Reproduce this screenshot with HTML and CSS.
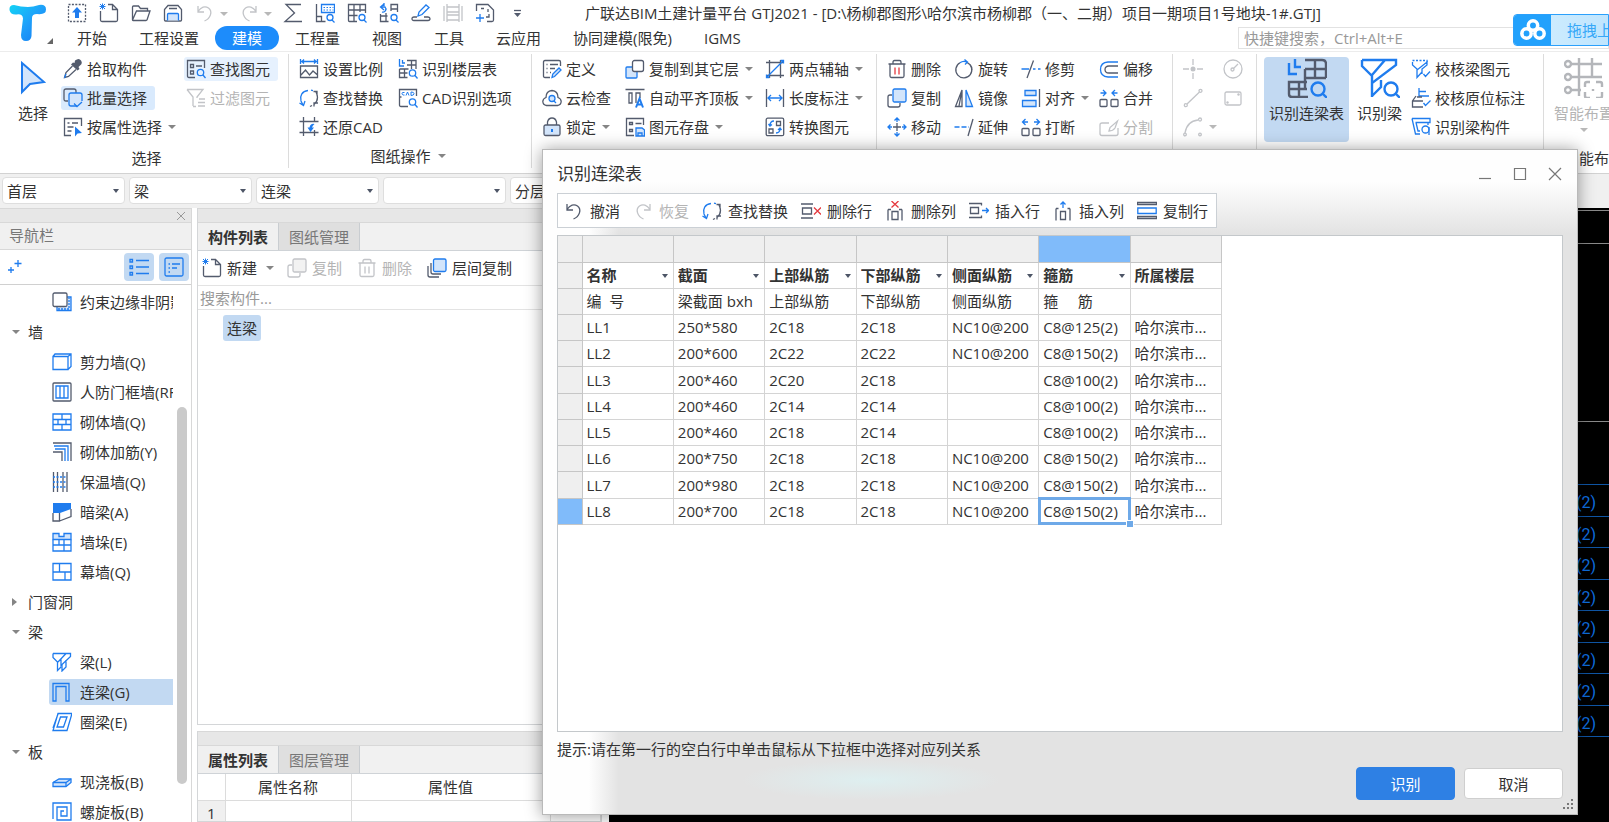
FILE: index.html
```html
<!DOCTYPE html>
<html lang="zh-CN">
<head>
<meta charset="utf-8">
<title>广联达BIM土建计量平台 GTJ2021</title>
<link rel="stylesheet" href="styles.css">
</head>
<body>
<svg class="defs" aria-hidden="true">
<defs>
<linearGradient id="logoFill" x1="0" y1="0" x2="1" y2="1"><stop offset="0" stop-color="#12d3f5"/><stop offset=".5" stop-color="#1ea0fa"/><stop offset="1" stop-color="#1479f2"/></linearGradient>
</defs>
<symbol id="i-upload" viewBox="0 0 20 20"><rect class="k" x="1.5" y="1.5" width="17" height="17" stroke-dasharray="2 1.4"/><path class="bf" d="M10 4l5 5.500h-3V15H8V9.500H5z"/></symbol>
<symbol id="i-new" viewBox="0 0 20 20"><path class="k" d="M1.500 8v9q0 1.500 1.500 1.500h14q1.500 0 1.500-1.500V6.500L13.500 1.500H9M13.500 1.500v5h5"/><path class="b thin" d="M3.500 0.500v6M0.500 3.500h6M1 1l5 5M6 1L1 6"/></symbol>
<symbol id="i-open" viewBox="0 0 20 20"><path class="k" d="M1.500 17V4q0-1 1-1h5l2 2.500h7V8M1.500 17L5.500 8h13.500l-3 9q-.3.500-1 .5H2q-.5 0-.5-.5z"/></symbol>
<symbol id="i-save" viewBox="0 0 20 20"><path class="k" d="M1.500 17V6.500L5 2.500h10l3.500 4V17q0 1-1 1h-15q-1 0-1-1zM6 5.500h8"/><path class="b fillb" d="M4.500 17.500v-6q0-1 1-1h9q1 0 1 1v6"/></symbol>
<symbol id="i-undo" viewBox="0 0 20 20"><path class="k" d="M3 3v6h6M3 8.500C6 4 10 2.500 13.500 5c4.500 3.500 2 10.500-4 13"/></symbol>
<symbol id="i-redo" viewBox="0 0 20 20"><path class="k" d="M17 3v6h-6M17 8.500C14 4 10 2.500 6.500 5c-4.500 3.500-2 10.500 4 13"/></symbol>
<symbol id="i-sigma" viewBox="0 0 20 20"><path class="k" d="M18 1.500H3L11.500 10 2 18.500h17"/></symbol>
<symbol id="i-q1" viewBox="0 0 20 20"><path class="k" d="M1.500 1v17.500h9M1.500 13.500h5v5"/><path class="b" d="M6.500 1.500h13v8h-13z"/><path class="b thin" stroke-dasharray="1.500 1.500" d="M8.500 4.500h10M8.500 7h10"/><circle class="b" cx="15" cy="14.500" r="3"/><path class="b" d="M17 17l2.500 2.500"/></symbol>
<symbol id="i-q2" viewBox="0 0 20 20"><path class="k" d="M10 18.500H2.500q-1 0-1-1V1.500h17V10M1.500 7h17M1.500 12.500h9M7 1.500v17M13 1.500V9"/><circle class="b" cx="15" cy="14.500" r="3"/><path class="b" d="M17 17l2.500 2.500"/></symbol>
<symbol id="i-q3" viewBox="0 0 20 20"><path class="b" d="M5 1L1.500 4 5 7M1.500 4H6a3 3 0 0 1-3 5M5 0v3"/><path class="k" d="M12 8V1.500h6.500V9M12 6h6M1.500 11v7.500h8M7 10v8.500M1.500 13h7"/><circle class="b" cx="15" cy="14.500" r="3"/><path class="b" d="M17 17l2.500 2.500"/></symbol>
<symbol id="i-pen" viewBox="0 0 20 20"><path class="b" d="M7 13l1-4 7-7 3 2.500-7 7z"/><path class="k" d="M6 14H3q-2 0-2 1.800t2 1.700h14q2 0 2-1.700t-2-1.800h-4"/></symbol>
<symbol id="i-rail" viewBox="0 0 20 20"><path class="k" d="M4 1v18M16 1v18M1 3v15M19 3v15M4 4h12M4 9h12M4 12h12M4 17h12"/></symbol>
<symbol id="i-frame" viewBox="0 0 20 20"><path class="k" d="M1.500 8V1.500H13L18.500 7v10q0 1.500-1.500 1.500h-5M6 5.500h3M13 9v-3M14 11v3h-3"/><path class="b" d="M5 11v8M1 15h8"/></symbol>
<symbol id="i-more" viewBox="0 0 20 20"><path class="k" d="M7 7.500h7"/><path class="kf" d="M7 10h7l-3.500 4z"/></symbol>
<symbol id="i-arrow" viewBox="0 0 26 34"><path class="b fillb thick" d="M2 2v29l8-8 14-2z"/></symbol>
<symbol id="i-picker" viewBox="0 0 20 20"><path class="kf" d="M12 1.500q4-3 6 0t-1 5l-1.500 1.500 1 2-2 1.500L8 5.500l2-2 1.500.5z"/><path class="k" d="M9.500 7L3 13.500 1.500 18.500l4-1L13 10.500"/><path class="b" d="M3 15l-1.500 4"/></symbol>
<symbol id="i-batch" viewBox="0 0 20 20"><path class="k" d="M5 13H3q-2 0-2-2V3q0-2 2-2h8q2 0 2 2v2"/><path class="b fillb" d="M14 18H8q-2 0-2-2V7q0-2 2-2h9q2 0 2 2v6"/><path class="b" d="M11 15.500l3 3 5-4.500"/></symbol>
<symbol id="i-attr" viewBox="0 0 20 20"><path class="k" d="M8 18.500H1.500v-17h17V9M4.500 6h2M9 6h6M4.500 10h6M4.500 14h4"/><path class="bf" d="M12 9.500v10l2.500-3 4.500-.5z"/></symbol>
<symbol id="i-find" viewBox="0 0 20 20"><path class="k" d="M9 18.500H3q-1.500 0-1.500-1.500V1.500h17V9M4.500 5.500h3v3h-3zM4.500 12h3v3h-3zM10 7h6"/><circle class="b" cx="14.500" cy="13.500" r="3.200"/><path class="b" d="M17 16l2.500 3"/></symbol>
<symbol id="i-filter" viewBox="0 0 20 20"><path class="k" d="M1 1.500h16L11 9v1M7 18V9L1 1.500M7 18.500h3M13 11h6M12 14.500h7M12 18h7"/></symbol>
<symbol id="i-scale" viewBox="0 0 20 20"><path class="b" d="M1.500 0v5M18.500 0v5M2 2.500h16M5 .5l-2 2 2 2M15 .5l2 2-2 2"/><path class="k" d="M1.500 7h17v11.500h-17zM2 16l4.500-5 4 5 3.500-4 4.500 4"/></symbol>
<symbol id="i-swap" viewBox="0 0 20 20"><path class="b" d="M9 2.500C3 3 .5 8 2 13l2 4M.5 15l4 2.500L6 13M12 2.200l2 .5"/><path class="k" d="M17 4c2 4 2 9-2 12.500M14.500 3.500H18v4M15 18.500V15h4M11 18.500l2-1"/></symbol>
<symbol id="i-crop" viewBox="0 0 20 20"><path class="k" d="M4.500 0v19M.5 4.500h19M.5 15.500h19M15.500 0v5M15.500 13v6"/><path class="bf" d="M15.500 7q-4-1-5 3.500H8.500l3 4.500 3.500-4.500h-2q.5-2 2.500-3.500z"/></symbol>
<symbol id="i-table" viewBox="0 0 20 20"><path class="b" d="M1.500 0v7H6M4.500 1v3H7"/><path class="k" d="M9 1.500h9V10M9 6h9M13.500 1.500V10M1.500 10h9M1.500 10v8.500h8M1.500 14h8M6.500 10v8"/><circle class="b" cx="14.500" cy="14" r="3.200"/><path class="b" d="M17 16.500l2.500 3"/></symbol>
<symbol id="i-cad" viewBox="0 0 20 20"><path class="k" d="M10 18.500H3q-1.500 0-1.500-1.500V1.500h17V8M1.500 9h2"/><path class="b thin" d="M6.500 4.500H5q-1 0-1 1t1 1.500h1.500M8 7.500l1.500-3.500 1.500 3.500M13 4v3.500q3 0 3-1.800T13 4z"/><circle class="b" cx="14.500" cy="14" r="3.200"/><path class="b" d="M17 16.500l2.500 3"/></symbol>
<symbol id="i-define" viewBox="0 0 20 20"><path class="k" d="M8 18.500H3q-1.500 0-1.500-1.500V3q0-1.500 1.500-1.500h14q1.500 0 1.500 1.500v4M4.500 5.500h1M8 5.500h8M4.500 9.500h1M8 9.500h5M4.500 13.500h1M8 13.500h1"/><path class="b fillb" d="M10 18.500l.8-3.500 6.200-6 2 2-6.500 6.500z"/></symbol>
<symbol id="i-cloud" viewBox="0 0 20 20"><path class="k" d="M4.500 17.500Q1 17 .8 13.500 1 10.500 4 9.500 4 3 10 2.500q6 .5 6 7 3 1 3.200 4-.2 3.500-3.700 4z"/><circle class="b fillb" cx="10" cy="10.500" r="3"/><path class="b" d="M12 13l2 2"/></symbol>
<symbol id="i-lock" viewBox="0 0 20 20"><rect class="k fillb" x="2" y="8" width="16" height="10.500" rx="1.500"/><path class="k" d="M5.500 8V5q1-4 4.500-4t4.500 4v3"/><path class="b thick" d="M10 12v3"/></symbol>
<symbol id="i-copyto" viewBox="0 0 20 20"><rect class="b fillb" x="1" y="8" width="11" height="11" rx="1"/><rect class="k fillw" x="7.500" y="1.500" width="11" height="11" rx="2"/></symbol>
<symbol id="i-align" viewBox="0 0 20 20"><path class="k" d="M.5 1.500h19M4 5h3v10H4zM11 15V5h4v5"/><path class="b thick" d="M11 19.500l3.500-9 3.500 9M12.500 16.500h4"/></symbol>
<symbol id="i-store" viewBox="0 0 20 20"><path class="k" d="M9 18.500H1.500v-17h17V8M4.500 5.500h3v2h-3zM10.500 6.500h6M4.500 12.500h3v2h-3z"/><path class="b fillb" d="M11 11h6l2.500 2v6H11zM13 19v-3h4v3"/></symbol>
<symbol id="i-axis" viewBox="0 0 20 20"><path class="k" d="M4.500 1v18M15.500 1v18M1 3.500h17M2 16.500h17"/><path class="b" d="M2 18L18 2M1.500 15.500v3h3M15.500 1.500h3v3"/></symbol>
<symbol id="i-length" viewBox="0 0 20 20"><path class="k" d="M1.500 1v18M18.500 1v18"/><path class="b" d="M2.500 10h15M6 7l-3 3 3 3M14 7l3 3-3 3"/></symbol>
<symbol id="i-convert" viewBox="0 0 20 20"><rect class="k" x="1.200" y="1.200" width="17.500" height="17.500" rx="1.500"/><path class="k" d="M11.500 4.500h4v4h-4zM4 12h4v4H4z"/><path class="b" d="M9 4Q5 4 5 8.500M3.500 7L5 9l2-1.500M11 16q4 0 4-4.500M13 13l2-2 1.500 2"/></symbol>
<symbol id="i-trash" viewBox="0 0 20 20"><path class="k" d="M1.500 5h17M6 5V3q0-1.500 1.500-1.500h5Q14 1.500 14 3v2M3 5v12q0 1.500 1.500 1.500h11q1.500 0 1.500-1.500V5"/><path class="r" d="M8 8.500v7M12 8.500v7"/></symbol>
<symbol id="i-copy" viewBox="0 0 20 20"><path class="k" d="M5 7H3Q1 7 1 9v8q0 2 2 2h8q2 0 2-2v-2"/><rect class="b fillb" x="6" y="1" width="13" height="13" rx="1.500"/></symbol>
<symbol id="i-move" viewBox="0 0 20 20"><path class="k" d="M10 6v8M6 10h8"/><path class="b" d="M7.500 3.500L10 1l2.500 2.500M10 1v4M7.500 16.500L10 19l2.500-2.500M10 19v-4M3.500 7.500L1 10l2.500 2.500M1 10h4M16.500 7.500L19 10l-2.500 2.500M19 10h-4"/></symbol>
<symbol id="i-rotate" viewBox="0 0 20 20"><path class="k" d="M13 3.500A8 8 0 1 1 6 3.800M16 5.500A8 8 0 0 1 18 11"/><path class="b" d="M6 3.800Q9 1.500 13 3M10.500.5L13.500 3 11 5.500"/></symbol>
<symbol id="i-mirror" viewBox="0 0 20 20"><path class="k" d="M8 2v16.500H1.500zM8 2L5 18"/><path class="b fillb" d="M12 2v16.500h6.500z"/></symbol>
<symbol id="i-extend" viewBox="0 0 20 20"><path class="b" stroke-dasharray="5 2" d="M.5 10H15"/><path class="k" d="M19 2l-5 17"/></symbol>
<symbol id="i-trim" viewBox="0 0 20 20"><path class="b" d="M.5 10H8M12 10h2.500M17 10h2.500"/><path class="k" d="M12.500 1.500L6 19"/></symbol>
<symbol id="i-alignr" viewBox="0 0 20 20"><path class="b fillb" d="M4 2.500h11v5H4zM1.500 12.500H15v6H1.500z"/><path class="k" d="M18.500 1v18"/></symbol>
<symbol id="i-break" viewBox="0 0 20 20"><rect class="k" x="1" y="11.500" width="7" height="7" rx="1"/><rect class="k" x="12" y="11.500" width="7" height="7" rx="1"/><path class="b" d="M1.500 5H7M4.500 2l-3 3 3 3M18.500 5H13M15.500 2l3 3-3 3"/></symbol>
<symbol id="i-merge" viewBox="0 0 20 20"><rect class="k" x="1" y="11.500" width="7" height="7" rx="1"/><rect class="k" x="12" y="11.500" width="7" height="7" rx="1"/><path class="b" d="M1.500 5H7M4 2l3 3-3 3M18.500 5H13M16 2l-3 3 3 3"/></symbol>
<symbol id="i-offset" viewBox="0 0 20 20"><path class="b" d="M19 3H9q-7.500.5-7.500 7.500T9 18h10"/><path class="k" d="M19 7h-9q-4 0-4 3.500t4 3.500h9"/></symbol>
<symbol id="i-split" viewBox="0 0 20 20"><path class="k" d="M10 6H3Q1 6 1 8v8.500q0 2 2 2h14q2 0 2-2V11M10 14l1-3.500L18.500 4 16 11q-2 3-6 3z"/></symbol>
<symbol id="i-point" viewBox="0 0 20 20"><path class="k" d="M10 0v6M10 14v6M0 10h6M14 10h6"/><circle class="kf" cx="10" cy="10" r="2.500"/></symbol>
<symbol id="i-line" viewBox="0 0 20 20"><path class="k" d="M4 16L16.500 4"/><circle class="k" cx="2.800" cy="17.200" r="1.500"/><circle class="k" cx="17.500" cy="2.800" r="1.500"/></symbol>
<symbol id="i-arc" viewBox="0 0 20 20"><path class="k" d="M2 16Q4 4 15 3"/><circle class="k" cx="2" cy="17.500" r="1.300"/><circle class="k" cx="17" cy="2.500" r="1.500"/><circle class="k" cx="17" cy="17.500" r="1.300"/></symbol>
<symbol id="i-circle" viewBox="0 0 20 20"><circle class="k" cx="10" cy="10" r="9"/><circle class="k" cx="9.500" cy="10.500" r="1.500"/><path class="k" d="M10.500 9.500L15 5"/></symbol>
<symbol id="i-rect" viewBox="0 0 20 20"><rect class="k" x="2" y="4" width="16" height="13" rx="1.500"/><circle class="kf" cx="4.500" cy="14.500" r="1.200"/><circle class="kf" cx="15.500" cy="6.500" r="1.200"/></symbol>
<symbol id="i-bigtable" viewBox="0 0 40 40"><g class="big"><path class="b" d="M2 5v11h8M8 1v8h6"/><path class="k" d="M18 2h17q4 0 4 4v14M18 11h21M28 2v18M18 20h21M20 24H2v12q0 3 3 3h16M2 31h18M12 24v15M18 11v20"/><circle class="b" cx="31" cy="31" r="6.500"/><path class="b" d="M35.500 35.500L40 40"/></g></symbol>
<symbol id="i-bigbeam" viewBox="0 0 40 40"><g class="big"><path class="b" d="M2 2h34v5L12 25V39M2 2v6l10 10v8M25 2L12 17M12 38l9-9V22"/><circle class="b" cx="31" cy="31" r="6.500"/><path class="b" d="M35.500 35.500L40 40"/></g></symbol>
<symbol id="i-biggrid" viewBox="0 0 40 40"><g class="big"><path class="k" d="M7 6h31M7 19h31M7 32h10M15 0v38M28 0v20"/><circle class="k fillw" cx="4" cy="6" r="3"/><circle class="k fillw" cx="4" cy="19" r="3"/><circle class="k fillw" cx="4" cy="32" r="3"/><path class="k" d="M21 29v-3q0-2 2-2h3M32 24h4q2 0 2 2v3M38 34v4q0 2-2 2h-4M26 40h-3q-2 0-2-2v-4M29 31v2"/></g></symbol>
<symbol id="i-chk1" viewBox="0 0 20 20"><path class="b" stroke-dasharray="2 1.500" d="M1.500 1.500H16v3"/><path class="b" d="M1.500 3v3L6 10v8.500l5-5.500M6 11l10-8v3l-5 4v5M12.500 15l2 2.500 4.500-5"/></symbol>
<symbol id="i-chk2" viewBox="0 0 20 20"><path class="b" d="M8 0v9M8 3.500h7M8 8h10M12.500 15l2 2.500 5-5"/><path class="k" d="M5 8L1.500 13v6H12M1.500 13H12M6 9h5"/></symbol>
<symbol id="i-chk3" viewBox="0 0 20 20"><path class="b" d="M1 1.500h18v4H4.500M1 1.500L4.500 17H9M5 5.500L7 14h2M17 6v2"/><circle class="b" cx="14.500" cy="12.500" r="3.500"/><path class="b" d="M18 10v8"/></symbol>
<symbol id="i-spark" viewBox="0 0 20 20"><path class="b" d="M13 3v7M9.500 6.500h7M6 10v6M3 13h6"/></symbol>
<symbol id="i-list" viewBox="0 0 20 20"><path class="b" d="M7 3.500h13M7 10h13M7 16.500h13M1 2.500h2.500v2.500H1zM1 9h2.500v2.500H1zM1 15.500h2.500V18H1z"/></symbol>
<symbol id="i-card" viewBox="0 0 20 20"><rect class="b" x="1" y="1" width="18" height="18" rx="1.500"/><path class="b" d="M4.500 7H6M8 7h8M4.500 11H6M8 11h5M4.500 15H6"/></symbol>
<symbol id="i-t1" viewBox="0 0 20 20"><path class="b fillb" d="M5 15v3.500h14V5h-4"/><path class="b" stroke-dasharray="2 1" d="M6 17h11V6"/><rect class="k fillw" x="1" y="1" width="14" height="13.500" rx="1.500"/></symbol>
<symbol id="i-t2" viewBox="0 0 20 20"><path class="b" d="M1 4.500h15v13H1zM1 4.500l2-2.500h16v12.500l-3 3M16 4.500L19 2"/></symbol>
<symbol id="i-t3" viewBox="0 0 20 20"><rect class="k" x="1" y="1" width="18" height="18" rx="1"/><path class="b" d="M4 4h12v12H4zM8 4v12M12 4v12"/></symbol>
<symbol id="i-t4" viewBox="0 0 20 20"><path class="b" d="M1 2h18v16H1zM1 7.500h18M1 12.500h18M10 2v5.500M6 7.500v5M14 7.500v5M10 12.500V18"/></symbol>
<symbol id="i-t5" viewBox="0 0 20 20"><path class="k" d="M1 1h18v18M1 10h9v9"/><path class="b" d="M2 4h14v15M3 7h10v12"/></symbol>
<symbol id="i-t6" viewBox="0 0 20 20"><path class="k" d="M1.500 0v20M5.500 0v20M11 0v20M15 0v20"/><path class="b" stroke-dasharray="2 1.500" d="M1 5h14M1 10h14M1 15h14"/></symbol>
<symbol id="i-t7" viewBox="0 0 20 20"><path class="bf" d="M1 1h18v6L8 11v0H1z"/><path class="k" d="M1 11v8h6.500v-8M7.500 19L19 14.500V7"/></symbol>
<symbol id="i-t8" viewBox="0 0 20 20"><path class="b fillb" d="M1 1.500h6v3h5v-3h7v6H1z"/><path class="b" d="M1 7.500V19h18V7.500M1 13h18M7 13V7.500M12 19v-6M12 7.500V13"/></symbol>
<symbol id="i-t9" viewBox="0 0 20 20"><path class="b" d="M1 1.500h18V18H1zM1 10h18M7.500 1.500V10M13 10v8"/></symbol>
<symbol id="i-beam" viewBox="0 0 20 20"><path class="b" d="M1 1.500h17.500v3L9 13.500V7.500M1 1.500v4L5.500 10v8.500L9 15M14 1.500L6 10M10 13v6l4-4V8"/></symbol>
<symbol id="i-link" viewBox="0 0 20 20"><path class="b" d="M1 19V1.500h16V19h-3V4.500H4V19z"/></symbol>
<symbol id="i-ring" viewBox="0 0 20 20"><path class="b" d="M6 1.500h14L15 18.500H1zM8.500 5H15l-3.500 10H5zM1 16l5-14"/></symbol>
<symbol id="i-slab" viewBox="0 0 20 20"><path class="b fillb" d="M1 10.500l6-3.500h12v3.500l-5 4H1z"/><path class="b" d="M1 10.500h13l5-3.500M14 10.500v4"/></symbol>
<symbol id="i-spiral" viewBox="0 0 20 20"><path class="b" d="M1 17V1h18v17H5V5h10v9H9V9h3"/></symbol>
<symbol id="i-layers" viewBox="0 0 20 20"><path class="k" d="M1 8v9q0 2 2 2h9M4 5v9q0 2 2 2h8"/><rect class="b fillb" x="6.500" y="1" width="12.500" height="12.500" rx="1.500"/></symbol>
<symbol id="i-delrow" viewBox="0 0 20 20"><path class="k" d="M0 3h12M0 17h12M1.500 7h9v6h-9z"/><path class="r" d="M13 6.500l7 7M20 6.500l-7 7"/></symbol>
<symbol id="i-delcol" viewBox="0 0 20 20"><path class="k" d="M3 8.500v11M17 8.500v11M7 10.500h6v8H7zM3 8.500h3M14 8.500h3"/><path class="r" d="M6.500 0l7 6.500M13.500 0l-7 6.500"/></symbol>
<symbol id="i-insrow" viewBox="0 0 20 20"><path class="k" d="M0 2.500h12.500v2M0 16.500h12.500v-2M1.500 6.500h8v6h-8z"/><path class="b" d="M13 9.500h6.500M17 7l2.500 2.500L17 12"/></symbol>
<symbol id="i-inscol" viewBox="0 0 20 20"><path class="k" d="M3 7.500v12M17 7.500v12M7.500 10.500h5v8h-5zM3 7.500h2.500M14.500 7.500H17"/><path class="b" d="M10 7V1M7.500 3.500L10 1l2.500 2.500"/></symbol>
<symbol id="i-copyrow" viewBox="0 0 20 20"><path class="k" d="M.5 1.500h19v2H.5zM.5 15.500h19v2H.5z"/><path class="b" d="M.8 7h18.400v5.500H.8z"/></symbol>
</svg>

<div class="app">
  <header class="head">
    <svg class="logo" viewBox="0 0 38 38" role="img" aria-label="T"><path fill="url(#logoFill)" d="M5 1Q0 1 .5 6q1 5 7 4.500 6-1 6.500 4L12 31q0 6 5 6t5.500-5L23 14q0-4 5-4 9 1 9-4.500Q37 0 30 1q-6 2-11 2Q12 3 5 1z"/></svg>
    <span class="logo-corner"></span>
    <div class="head-rows">
      <div class="quick">
        <button aria-label="上传"><svg><use href="#i-upload"/></svg></button>
        <button aria-label="新建"><svg><use href="#i-new"/></svg></button>
        <button aria-label="打开"><svg><use href="#i-open"/></svg></button>
        <button aria-label="保存"><svg><use href="#i-save"/></svg></button>
        <button class="off" aria-label="撤销"><svg><use href="#i-undo"/></svg></button><i class="caret off"></i>
        <button class="off" aria-label="重做"><svg><use href="#i-redo"/></svg></button><i class="caret off"></i>
        <button aria-label="汇总"><svg><use href="#i-sigma"/></svg></button>
        <button aria-label="查看工程量"><svg><use href="#i-q1"/></svg></button>
        <button aria-label="查看报表"><svg><use href="#i-q2"/></svg></button>
        <button aria-label="查找"><svg><use href="#i-q3"/></svg></button>
        <button aria-label="编辑"><svg><use href="#i-pen"/></svg></button>
        <button class="off" aria-label="轨道"><svg><use href="#i-rail"/></svg></button>
        <button aria-label="添加"><svg><use href="#i-frame"/></svg></button>
        <button aria-label="更多"><svg><use href="#i-more"/></svg></button>
        <h1>广联达BIM土建计量平台 GTJ2021 - [D:\杨柳郡图形\哈尔滨市杨柳郡（一、二期）项目一期项目1号地块-1#.GTJ]</h1>
      </div>
      <nav class="tabs">
        <button>开始</button><button>工程设置</button><button class="on">建模</button><button>工程量</button><button>视图</button><button>工具</button><button>云应用</button><button>协同建模(限免)</button><button>IGMS</button>
        <input class="hot" type="text" aria-label="快捷键搜索" placeholder="快捷键搜索，Ctrl+Alt+E">
      </nav>
    </div>
    <div class="drop"><span class="drop-ic"><svg viewBox="0 0 26 22"><g fill="none" stroke="#fff" stroke-width="3.500"><circle cx="13" cy="6.500" r="4.700"/><circle cx="6.500" cy="14.500" r="4.700"/><circle cx="19.500" cy="14.500" r="4.700"/></g></svg></span><span class="drop-tx">拖拽上传</span></div>
  </header>

  <div class="ribbon">
    <section class="grp g1">
      <button class="bigb sel"><svg><use href="#i-arrow"/></svg>选择</button>
      <div class="col c1"><button class="cmd"><svg><use href="#i-picker"/></svg>拾取构件</button><button class="cmd hot1"><svg><use href="#i-batch"/></svg>批量选择</button><button class="cmd"><svg><use href="#i-attr"/></svg>按属性选择<i class="caret"></i></button></div>
      <div class="col"><button class="cmd hot2"><svg><use href="#i-find"/></svg>查找图元</button><button class="cmd off"><svg><use href="#i-filter"/></svg>过滤图元</button></div>
      <h2>选择</h2>
    </section>
    <section class="grp g2">
      <div class="col c1"><button class="cmd"><svg><use href="#i-scale"/></svg>设置比例</button><button class="cmd"><svg><use href="#i-swap"/></svg>查找替换</button><button class="cmd"><svg><use href="#i-crop"/></svg>还原CAD</button></div>
      <div class="col"><button class="cmd"><svg><use href="#i-table"/></svg>识别楼层表</button><button class="cmd"><svg><use href="#i-cad"/></svg>CAD识别选项</button></div>
      <h2>图纸操作<i class="caret"></i></h2>
    </section>
    <section class="grp g3">
      <div class="col c1"><button class="cmd"><svg><use href="#i-define"/></svg>定义</button><button class="cmd"><svg><use href="#i-cloud"/></svg>云检查</button><button class="cmd"><svg><use href="#i-lock"/></svg>锁定<i class="caret"></i></button></div>
      <div class="col c2"><button class="cmd"><svg><use href="#i-copyto"/></svg>复制到其它层<i class="caret"></i></button><button class="cmd"><svg><use href="#i-align"/></svg>自动平齐顶板<i class="caret"></i></button><button class="cmd"><svg><use href="#i-store"/></svg>图元存盘<i class="caret"></i></button></div>
      <div class="col"><button class="cmd"><svg><use href="#i-axis"/></svg>两点辅轴<i class="caret"></i></button><button class="cmd"><svg><use href="#i-length"/></svg>长度标注<i class="caret"></i></button><button class="cmd"><svg><use href="#i-convert"/></svg>转换图元</button></div>
    </section>
    <section class="grp g4">
      <div class="col c1"><button class="cmd"><svg><use href="#i-trash"/></svg>删除</button><button class="cmd"><svg><use href="#i-copy"/></svg>复制</button><button class="cmd"><svg><use href="#i-move"/></svg>移动</button></div>
      <div class="col c1"><button class="cmd"><svg><use href="#i-rotate"/></svg>旋转</button><button class="cmd"><svg><use href="#i-mirror"/></svg>镜像</button><button class="cmd"><svg><use href="#i-extend"/></svg>延伸</button></div>
      <div class="col c2"><button class="cmd"><svg><use href="#i-trim"/></svg>修剪</button><button class="cmd"><svg><use href="#i-alignr"/></svg>对齐<i class="caret"></i></button><button class="cmd"><svg><use href="#i-break"/></svg>打断</button></div>
      <div class="col"><button class="cmd"><svg><use href="#i-offset"/></svg>偏移</button><button class="cmd"><svg><use href="#i-merge"/></svg>合并</button><button class="cmd off"><svg><use href="#i-split"/></svg>分割</button></div>
    </section>
    <section class="grp g5">
      <div class="col c1"><button class="cmd off" aria-label="点"><svg><use href="#i-point"/></svg></button><button class="cmd off" aria-label="直线"><svg><use href="#i-line"/></svg></button><button class="cmd off" aria-label="弧"><svg><use href="#i-arc"/></svg><i class="caret off"></i></button></div>
      <div class="col"><button class="cmd off" aria-label="圆"><svg><use href="#i-circle"/></svg></button><button class="cmd off" aria-label="矩形"><svg><use href="#i-rect"/></svg></button></div>
    </section>
    <section class="grp g6">
      <button class="bigb on"><svg><use href="#i-bigtable"/></svg>识别连梁表</button>
      <button class="bigb"><svg><use href="#i-bigbeam"/></svg>识别梁</button>
      <div class="col"><button class="cmd"><svg><use href="#i-chk1"/></svg>校核梁图元</button><button class="cmd"><svg><use href="#i-chk2"/></svg>校核原位标注</button><button class="cmd"><svg><use href="#i-chk3"/></svg>识别梁构件</button></div>
    </section>
    <section class="grp g7">
      <button class="bigb off"><svg><use href="#i-biggrid"/></svg>智能布置<i class="caret off"></i></button>
      <h2>智能布置</h2>
    </section>
  </div>

  <div class="pickers">
    <label class="combo"><select aria-label="楼层"><option>首层</option></select></label>
    <label class="combo"><select aria-label="构件大类"><option>梁</option></select></label>
    <label class="combo"><select aria-label="构件类型"><option>连梁</option></select></label>
    <label class="combo"><select aria-label="构件"><option></option></select></label>
    <label class="combo"><select aria-label="分层"><option>分层1</option></select></label>
  </div>

  <main class="work">
    <aside class="nav">
      <div class="strip"><button aria-label="关闭"><svg viewBox="0 0 10 10"><path d="M1 1l8 8M9 1L1 9"/></svg></button></div>
      <h2 class="nav-title">导航栏</h2>
      <div class="nav-tools"><button class="plain" aria-label="添加"><svg><use href="#i-spark"/></svg></button><button aria-label="列表"><svg><use href="#i-list"/></svg></button><button aria-label="卡片"><svg><use href="#i-card"/></svg></button></div>
      <div class="nav-body">
        <ul class="tree">
          <li><button class="leaf"><svg><use href="#i-t1"/></svg>约束边缘非阴影</button></li>
          <li><button class="node"><i class="caret"></i>墙</button></li>
          <li><button class="leaf"><svg><use href="#i-t2"/></svg>剪力墙(Q)</button></li>
          <li><button class="leaf"><svg><use href="#i-t3"/></svg>人防门框墙(RF)</button></li>
          <li><button class="leaf"><svg><use href="#i-t4"/></svg>砌体墙(Q)</button></li>
          <li><button class="leaf"><svg><use href="#i-t5"/></svg>砌体加筋(Y)</button></li>
          <li><button class="leaf"><svg><use href="#i-t6"/></svg>保温墙(Q)</button></li>
          <li><button class="leaf"><svg><use href="#i-t7"/></svg>暗梁(A)</button></li>
          <li><button class="leaf"><svg><use href="#i-t8"/></svg>墙垛(E)</button></li>
          <li><button class="leaf"><svg><use href="#i-t9"/></svg>幕墙(Q)</button></li>
          <li><button class="node"><i class="caret shut"></i>门窗洞</button></li>
          <li><button class="node"><i class="caret"></i>梁</button></li>
          <li><button class="leaf"><svg><use href="#i-beam"/></svg>梁(L)</button></li>
          <li><button class="leaf on"><svg><use href="#i-link"/></svg>连梁(G)</button></li>
          <li><button class="leaf"><svg><use href="#i-ring"/></svg>圈梁(E)</button></li>
          <li><button class="node"><i class="caret"></i>板</button></li>
          <li><button class="leaf"><svg><use href="#i-slab"/></svg>现浇板(B)</button></li>
          <li><button class="leaf"><svg><use href="#i-spiral"/></svg>螺旋板(B)</button></li>
        </ul>
        <div class="bar"><div class="thumb"></div></div>
      </div>
    </aside>

    <div class="side">
      <section class="pane pane-list">
        <div class="strip"></div>
        <div class="ptabs"><button class="on">构件列表</button><button>图纸管理</button></div>
        <div class="ptools">
          <button><svg><use href="#i-new"/></svg>新建<i class="caret"></i></button>
          <button class="off"><svg><use href="#i-copy"/></svg>复制</button>
          <button class="off"><svg><use href="#i-trash"/></svg>删除</button>
          <button><svg><use href="#i-layers"/></svg>层间复制</button>
        </div>
        <input class="psearch" type="text" aria-label="搜索构件" placeholder="搜索构件...">
        <div class="plist"><button>连梁</button></div>
      </section>
      <section class="pane pane-prop">
        <div class="strip"></div>
        <div class="ptabs"><button class="on">属性列表</button><button>图层管理</button></div>
        <table class="props">
          <colgroup><col class="p0"><col class="p1"><col class="p2"><col></colgroup>
          <tr><th></th><th>属性名称</th><th>属性值</th><th></th></tr>
          <tr><td class="no">1</td><td></td><td></td><td></td></tr>
        </table>
      </section>
    </div>

    <div class="canvas">
      <div class="gl a"></div><div class="gl b1"></div><div class="gl c"></div><div class="gl d"></div>
      <div class="cad"><span>(2)</span><span>(2)</span><span>(2)</span><span>(2)</span><span>(2)</span><span>(2)</span><span>(2)</span><span>(2)</span></div>
    </div>
  </main>

  <div class="dialog" role="dialog" aria-labelledby="dlg-title">
    <div class="dtitle"><h2 id="dlg-title">识别连梁表</h2>
      <button aria-label="最小化"><svg viewBox="0 0 16 16"><path d="M2 12.500h12"/></svg></button>
      <button aria-label="最大化"><svg viewBox="0 0 16 16"><path d="M2.500 2.500h11v11h-11z"/></svg></button>
      <button aria-label="关闭"><svg viewBox="0 0 16 16"><path d="M2 2l12 12M14 2L2 14"/></svg></button>
    </div>
    <div class="dtools">
      <button><svg><use href="#i-undo"/></svg>撤消</button>
      <button class="off"><svg><use href="#i-redo"/></svg>恢复</button>
      <button><svg><use href="#i-swap"/></svg>查找替换</button>
      <button><svg><use href="#i-delrow"/></svg>删除行</button>
      <button><svg><use href="#i-delcol"/></svg>删除列</button>
      <button><svg><use href="#i-insrow"/></svg>插入行</button>
      <button><svg><use href="#i-inscol"/></svg>插入列</button>
      <button><svg><use href="#i-copyrow"/></svg>复制行</button>
    </div>
    <div class="dgrid">
      <table class="sheet">
        <colgroup><col class="s0"><col><col><col><col><col><col><col></colgroup>
        <thead>
          <tr class="blank"><th></th><th></th><th></th><th></th><th></th><th></th><th class="on"></th><th></th></tr>
          <tr class="map"><th></th>
            <th><label class="pick"><select aria-label="列1"><option>名称</option></select></label></th>
            <th><label class="pick"><select aria-label="列2"><option>截面</option></select></label></th>
            <th><label class="pick"><select aria-label="列3"><option>上部纵筋</option></select></label></th>
            <th><label class="pick"><select aria-label="列4"><option>下部纵筋</option></select></label></th>
            <th><label class="pick"><select aria-label="列5"><option>侧面纵筋</option></select></label></th>
            <th><label class="pick"><select aria-label="列6"><option>箍筋</option></select></label></th>
            <th>所属楼层</th></tr>
        </thead>
        <tbody>
          <tr><th></th><td class="pre">编  号</td><td>梁截面 bxh</td><td>上部纵筋</td><td>下部纵筋</td><td>侧面纵筋</td><td class="pre">箍     筋</td><td></td></tr>
          <tr><th></th><td>LL1</td><td>250*580</td><td>2C18</td><td>2C18</td><td>NC10@200</td><td>C8@125(2)</td><td>哈尔滨市...</td></tr>
          <tr><th></th><td>LL2</td><td>200*600</td><td>2C22</td><td>2C22</td><td>NC10@200</td><td>C8@150(2)</td><td>哈尔滨市...</td></tr>
          <tr><th></th><td>LL3</td><td>200*460</td><td>2C20</td><td>2C18</td><td></td><td>C8@100(2)</td><td>哈尔滨市...</td></tr>
          <tr><th></th><td>LL4</td><td>200*460</td><td>2C14</td><td>2C14</td><td></td><td>C8@100(2)</td><td>哈尔滨市...</td></tr>
          <tr><th></th><td>LL5</td><td>200*460</td><td>2C18</td><td>2C14</td><td></td><td>C8@100(2)</td><td>哈尔滨市...</td></tr>
          <tr><th></th><td>LL6</td><td>200*750</td><td>2C18</td><td>2C18</td><td>NC10@200</td><td>C8@150(2)</td><td>哈尔滨市...</td></tr>
          <tr><th></th><td>LL7</td><td>200*980</td><td>2C18</td><td>2C18</td><td>NC10@200</td><td>C8@150(2)</td><td>哈尔滨市...</td></tr>
          <tr><th class="on"></th><td>LL8</td><td>200*700</td><td>2C18</td><td>2C18</td><td>NC10@200</td><td class="cur">C8@150(2)</td><td>哈尔滨市...</td></tr>
        </tbody>
      </table>
    </div>
    <p class="hint">提示:请在第一行的空白行中单击鼠标从下拉框中选择对应列关系</p>
    <div class="dfoot"><button class="ok">识别</button><button class="cancel">取消</button></div>
    <svg class="grip" viewBox="0 0 12 12"><path d="M9 0h2v2H9zM5 4h2v2H5zM9 4h2v2H9zM1 8h2v2H1zM5 8h2v2H5zM9 8h2v2H9z"/></svg>
  </div>
</div>
</body>
</html>
```
FILE: styles.css
```css
:root {
  --ink: #535b6d;
  --accent: #1f7cee;
  --tint: #d3e5fb;
  --danger: #e5393f;
  --line: #d4d6d8;
}
* { box-sizing: border-box; }
body { margin: 0; color: #333; font: 15px/20px "Open Sans", "Noto Sans CJK SC", sans-serif; }
button, input, select { margin: 0; padding: 0; border: 0; background: none; color: inherit; font: inherit; white-space: nowrap; }
h1, h2, p, ul { margin: 0; padding: 0; font-size: 15px; font-weight: 400; list-style: none; }
svg { display: block; flex: none; width: 20px; height: 20px; }
.defs { position: absolute; width: 0; height: 0; }

.k, .b, .r { fill: none; stroke-width: 1.3; stroke: var(--ink); }
.b { stroke: var(--accent); }
.r { stroke: var(--danger); }
.kf { fill: var(--ink); }
.bf { fill: var(--accent); }
.fillb { fill: var(--tint); }
.fillw { fill: #fff; }
.thin { stroke-width: 1; }
.thick { stroke-width: 2; }
.big .k, .big .b { stroke-width: 2.4; }
.off { --ink: #c2c4c8; --accent: #c2c4c8; --tint: #f2f2f2; --danger: #c2c4c8; color: #b4b4b4; }

.caret { flex: none; width: 0; height: 0; border: 4px solid transparent; border-top: 4px solid #858585; border-bottom: 0; }
.caret.off { border-top-color: #b8b8b8; }
.caret.shut { border: 4px solid transparent; border-left: 5px solid #858585; border-right: 0; }

.app { position: relative; display: flex; flex-direction: column; height: 100vh; overflow: hidden; background: #fff; }

/* title and menu */
.head { position: relative; display: flex; flex: none; height: 52px; border-bottom: 1px solid #ececec; }
.logo { width: 38px; height: 38px; margin: 4px 0 0 9px; }
.logo-corner { width: 0; height: 0; margin-top: 38px; border: 3px solid #666; border-top-color: transparent; border-left-color: transparent; }
.head-rows { flex: 1; min-width: 0; }
.quick { display: flex; align-items: center; height: 25px; padding-left: 14px; }
.quick button { margin-right: 12px; }
.quick .caret { margin: 2px 11px 0 -7px; }
.quick h1 { margin-left: 46px; white-space: nowrap; }
.tabs { display: flex; align-items: center; height: 26px; padding-left: 8px; }
.tabs button { height: 24px; padding: 0 16px; }
.tabs .on { padding: 0 17px; border-radius: 12px; background: #1d8cfb; color: #fff; }
.hot { width: 371px; height: 22px; margin-left: auto; padding-left: 5px; border: 1px solid #e2e2e2; }
.hot::placeholder, .psearch::placeholder { color: #999; opacity: 1; }
.drop { position: absolute; top: 14px; right: 0; display: flex; width: 96px; height: 32px; overflow: hidden; border: 1px solid #2ba0fb; border-radius: 4px 0 0 4px; background: linear-gradient(90deg, #d4effe, #bfe5fe); }
.drop-ic { display: grid; flex: none; place-items: center; width: 37px; background: #22a1fc; }
.drop-ic svg { width: 26px; height: 22px; }
.drop-tx { padding: 5px 0 0 16px; color: #37a8f8; white-space: nowrap; }

/* ribbon */
.ribbon { display: flex; flex: none; height: 122px; overflow: hidden; border-bottom: 1px solid #d2d2d2; }
.grp { position: relative; display: flex; flex: none; align-items: flex-start; padding-top: 5px; }
.grp:not(:last-child)::after { position: absolute; top: 2px; right: 0; width: 1px; height: 114px; background: #dcdcdc; content: ""; }
.grp h2 { position: absolute; right: 0; bottom: 5px; left: 0; display: flex; justify-content: center; align-items: center; gap: 7px; white-space: nowrap; }
.col { display: flex; flex-direction: column; align-items: flex-start; gap: 5px; }
.cmd { display: flex; align-items: center; gap: 4px; height: 24px; padding: 0 8px 1px 2px; border-radius: 3px; }
.cmd .caret { margin-left: 2px; }
.hot1 { background: #d9eafd; }
.hot2 { background: #e6f1fe; }
.bigb { display: flex; flex-direction: column; align-items: center; gap: 5px; height: 85px; padding: 1px 5px; border-radius: 4px; }
.bigb svg { width: 40px; height: 40px; }
.bigb.on { background: #c2d9f2; }
.g1 { width: 289px; padding-left: 13px; }
.g1 .c1 { width: 123px; margin-left: 8px; }
.g1 h2 { left: 4px; }
.sel svg { width: 26px; height: 34px; margin: 3px 0; }
.g2 { width: 243px; padding-left: 8px; }
.g2 .c1 { width: 99px; }
.g2 h2 { right: 5px; bottom: 7px; }
.g3 { width: 345px; padding-left: 8px; }
.g3 .c1 { width: 83px; }
.g3 .c2 { width: 140px; }
.g4 { width: 296px; padding-left: 8px; }
.g4 .c1 { width: 67px; }
.g4 .c2 { width: 78px; }
.g5 { width: 84px; padding-left: 8px; }
.g5 .c1 { width: 40px; }
.g5 .cmd { padding-right: 0; }
.g6 { width: 287px; padding-left: 7px; }
.g6 .bigb + .bigb { margin: 0 2px 0 3px; }
.g7 { flex: 1; min-width: 66px; padding-left: 5px; }
.g7 .bigb { --ink: #b4b6ba; }
.g7 h2 { left: 20px; justify-content: flex-start; }

/* selectors */
.pickers { display: flex; flex: none; gap: 4px; height: 34px; padding: 3px 2px; background: #f0f0f0; }
.combo { position: relative; flex: none; width: 123px; height: 27px; border: 1px solid #dedede; border-radius: 4px; background: #fff; }
.combo::after, .pick::after { position: absolute; top: 11px; right: 5px; border: 3px solid transparent; border-top: 4px solid #4d5566; border-bottom: 0; content: ""; pointer-events: none; }
.combo select, .pick select { width: 100%; height: 100%; padding-left: 4px; appearance: none; outline: 0; }

/* work area */
.work { display: flex; flex: 1; min-height: 0; }
.strip { display: flex; flex: none; justify-content: flex-end; align-items: center; height: 15px; padding-right: 5px; border-top: 1px solid #d8d8d8; border-bottom: 1px solid #d8d8d8; background: #e7e7e7; }
.strip svg { width: 10px; height: 10px; stroke: #999; }
.nav { display: flex; flex: none; flex-direction: column; width: 192px; margin-right: 5px; border-right: 1px solid #d8d8d8; }
.nav-title { flex: none; height: 26px; padding: 2px 9px; background: #f0f0f0; color: #777; }
.nav-tools { display: flex; flex: none; gap: 5px; align-items: center; height: 36px; padding: 0 2px 0 5px; border-top: 1px solid #d8d8d8; border-bottom: 1px solid #d0d0d0; }
.nav-tools button { display: grid; place-items: center; width: 30px; height: 28px; border-radius: 4px; background: #c2d9f2; }
.nav-tools .plain { width: 20px; margin-right: auto; background: none; }
.nav-body { display: flex; flex: 1; min-height: 0; overflow: hidden; }
.tree { width: 173px; padding-top: 2px; }
.tree li { height: 30px; padding-top: 2px; }
.tree button { display: flex; align-items: center; height: 26px; overflow: hidden; }
.leaf { gap: 8px; width: 124px; margin-left: 49px; padding-left: 3px; border-radius: 3px; }
.leaf.on { border-radius: 3px 0 0 3px; background: #c2d9f2; }
.node { gap: 8px; padding-left: 12px; }
.node .shut { margin-right: 3px; }
.bar { width: 10px; margin-left: 4px; padding-top: 122px; }
.thumb { height: 377px; border-radius: 5px; background: #cacaca; }

.side { display: flex; flex: none; flex-direction: column; gap: 6px; width: 405px; margin-right: 7px; }
.pane { display: flex; flex-direction: column; border: 1px solid var(--line); border-top: 0; }
.pane-list { flex: 1; }
.pane-prop { flex: none; height: 91px; overflow: hidden; }
.ptabs { display: flex; flex: none; height: 28px; background: #f1f1f1; border-bottom: 1px solid #cfd3d7; }
.ptabs button { padding: 0 10px; border-right: 1px solid #c9cdd1; background: #dfdfdf; color: #777; }
.ptabs .on { background: #f0f0f0; color: #333; font-weight: 700; }
.ptools { display: flex; flex: none; gap: 15px; align-items: center; height: 35px; padding-left: 4px; border-bottom: 1px solid #e3e3e3; }
.ptools button { display: flex; gap: 5px; align-items: center; }
.ptools .caret { margin: 0 -2px 0 4px; }
.psearch { flex: none; height: 24px; padding-left: 2px; border-bottom: 1px solid #e3e3e3; }
.plist { padding: 5px 25px; }
.plist button { height: 26px; padding: 0 4px; border-radius: 3px; background: #c2d9f2; }
.props { width: 100%; border-collapse: collapse; table-layout: fixed; }
.props th, .props td { height: 26px; padding: 0; border: 1px solid #dcdcdc; border-top: 0; border-left: 0; font-weight: 400; text-align: center; }
.props .no { background: #f0f0f0; }
.p0 { width: 27px; }
.p1 { width: 126px; }
.p2 { width: 199px; }

.canvas { flex: 1; min-width: 0; overflow: hidden; background: #000; }
.gl { border-bottom: 1px solid #8a8a8a; }
.gl.a { height: 3px; }
.gl.b1 { height: 33px; }
.gl.c { height: 178px; }
.gl.d { height: 63px; border-color: #0f55a5; }
.cad { display: grid; grid-template-rows: repeat(8, 1fr); height: 252px; color: #0f6fe0; font: 16px/36px Roboto, sans-serif; text-align: right; }
.cad span { padding-right: 13px; border-bottom: 1px solid #0f55a5; overflow: hidden; }

/* recognition window */
.dialog { position: absolute; top: 149px; right: 31px; bottom: 7px; left: 542px; display: flex; flex-direction: column; padding: 0 14px 14px; border: 1px solid #b9b9b9; box-shadow: 0 1px 16px rgba(0, 0, 0, .4);
  background: radial-gradient(130px 20px at 328px 630px, #deeff0, #deeff000), linear-gradient(#fefefe 32px, #fefefe00 84px), linear-gradient(90deg, #fefefe 46px, #fefefe00 76px), #e3e3e3; }
.dtitle { display: flex; flex: none; gap: 19px; align-items: center; height: 43px; padding-top: 4px; }
.dtitle h2 { margin-right: auto; font-size: 17px; line-height: 24px; }
.dtitle svg { width: 16px; height: 16px; fill: none; stroke: #777; stroke-width: 1.2; }
.dtools { display: flex; flex: none; gap: 13px; align-items: center; align-self: flex-start; height: 35px; padding: 0 8px 0 6px; border: 1px solid #cbd0d5; background: #fff; }
.dtools button { display: flex; gap: 6px; align-items: center; }
.dtools svg { width: 20px; height: 20px; }
.dgrid { flex: 1; min-height: 0; margin-top: 7px; border: 1px solid #c4c8cb; background: #fff; overflow: hidden; }
.sheet { border-collapse: collapse; table-layout: fixed; width: 664px; }
.s0 { width: 24px; }
.sheet th, .sheet td { height: 26px; padding: 0 0 0 4px; border: 1px solid #d4d4d4; border-top: 0; border-left: 0; text-align: left; white-space: nowrap; line-height: 20px; }
.sheet tbody tr:nth-child(4n) > * { height: 27px; }
.sheet .blank th, .sheet th:first-child { border-color: #c6c6c6; background: #efefef; }
.sheet .blank .on, .sheet tbody .on { background: #80bbfa; }
.pick { position: relative; display: block; height: 20px; }
.pick::after { top: 9px; }
.pick select { padding: 0; font-weight: 700; }
.sheet .pre { white-space: pre; }
.sheet .cur { position: relative; outline: 3px solid #6ea9e8; outline-offset: -2px; }
.cur::after { position: absolute; right: -4px; bottom: -4px; width: 6px; height: 6px; border: 1px solid #fff; background: #6ea9e8; content: ""; }
.hint { flex: none; height: 35px; padding-top: 7px; }
.dfoot { display: flex; flex: none; gap: 9px; justify-content: flex-end; align-items: center; height: 33px; }
.dfoot button { width: 99px; height: 31px; border: 1px solid #cfcfcf; border-radius: 4px; background: #fff; }
.dfoot .ok { height: 33px; border-color: #2e80e4; background: #2e80e4; color: #fff; }
.grip { position: absolute; right: 3px; bottom: 3px; width: 12px; height: 12px; fill: #777; }
```
